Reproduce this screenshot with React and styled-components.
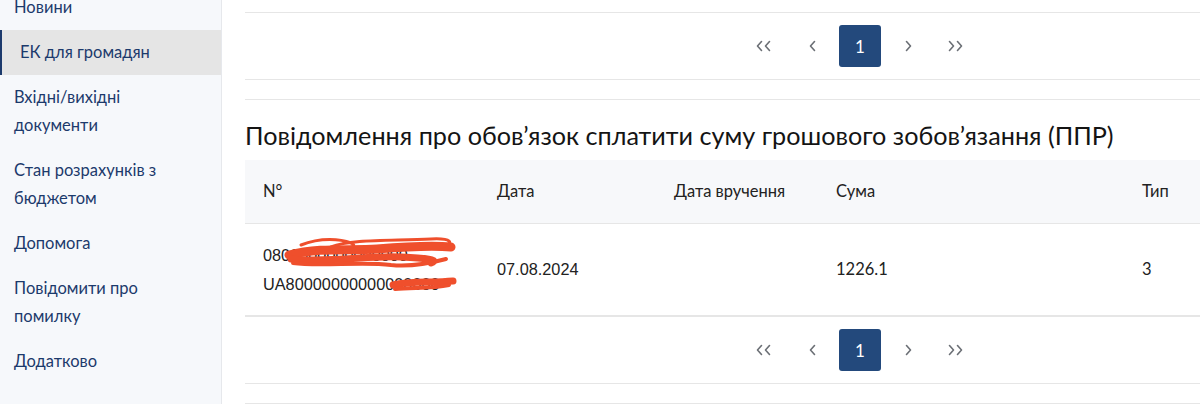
import React from "react";
import styled, { createGlobalStyle } from "styled-components";

const GlobalStyle = createGlobalStyle`
    html, body {
        margin: 0;
        padding: 0;
        background: #ffffff;
        overflow: hidden;
    }
    body {
        font-family: Lato, "Noto Sans", sans-serif;
        color: #1a1a1a;
    }
`;

const Page = styled.div`
    display: flex;
    width: 1200px;
    height: 404px;
    overflow: hidden;
`;

const Sidebar = styled.nav`
    flex: 0 0 221px;
    background: #f6f8fb;
    border-right: 1px solid #e6e8ec;
    display: flex;
    flex-direction: column;
    margin-top: -15px;
`;

const NavItem = styled.div`
    padding: 8px 22px 9px ${p => (p.$active ? "18px" : "14px")};
    font-size: 16.5px;
    line-height: 28px;
    color: #1c3a6c;
    background: ${p => (p.$active ? "#e5e5e5" : "transparent")};
    border-left: ${p => (p.$active ? "2px solid #1c3a6c" : "none")};
`;

const Main = styled.main`
    flex: 0 0 1230px;
    padding-left: 23px;
    margin-top: 12px;
`;

const Pager = styled.div`
    display: flex;
    justify-content: center;
    align-items: center;
    gap: 6px;
    height: 66px;
    border-top: 1px solid #e6e6e6;
    border-bottom: 1px solid #e6e6e6;
`;

const PageLink = styled.span`
    width: 42px;
    height: 42px;
    display: flex;
    align-items: center;
    justify-content: center;
    border-radius: 3px;
    background: ${p => (p.$current ? "#23497c" : "transparent")};
    color: ${p => (p.$current ? "#ffffff" : "#6b6f75")};
    font-size: 17px;
`;

const Section = styled.section`
    margin-top: 19px;
    border-top: 1px solid #e6e6e6;
`;

const Title = styled.h2`
    margin: 0;
    padding: 19px 0 9px;
    font-size: 25.2px;
    line-height: 32px;
    font-weight: 400;
    color: #141414;
    white-space: nowrap;
`;

const Row = styled.div`
    display: grid;
    grid-template-columns: 234px 177px 162px 306px 351px;
    align-items: center;
    height: ${p => (p.$head ? "63px" : "91px")};
    background: ${p => (p.$head ? "#f7f8fa" : "transparent")};
    border-bottom: 1px solid #e6e6e6;
    font-size: 16.5px;
    color: #222;
`;

const Cell = styled.div`
    padding-left: 18px;
    line-height: 29px;
    font-family: ${p => (p.$plain ? '"Liberation Sans", Arial, sans-serif' : "inherit")};
    font-size: ${p => (p.$plain ? "16.3px" : "inherit")};
    position: relative;
`;

const Scribble = styled.svg`
    position: absolute;
    left: 36px;
    top: -8px;
    pointer-events: none;
`;

const Chevron = ({ dir, double }) => {
    const one = dir === "left" ? "M5 1 L1 5.5 L5 10" : "M1 1 L5 5.5 L1 10";
    return (
        <svg width={double ? 16 : 7} height="12" viewBox={double ? "0 0 16 12" : "0 0 7 12"}>
            <g fill="none" stroke="currentColor" strokeWidth="1.6" strokeLinecap="round" strokeLinejoin="round">
                <path d={one} transform="translate(0.5 0.5)" />
                {double && <path d={one} transform="translate(8.5 0.5)" />}
            </g>
        </svg>
    );
};

const Pagination = () => (
    <Pager>
        <PageLink><Chevron dir="left" double /></PageLink>
        <PageLink><Chevron dir="left" /></PageLink>
        <PageLink $current>1</PageLink>
        <PageLink><Chevron dir="right" /></PageLink>
        <PageLink><Chevron dir="right" double /></PageLink>
    </Pager>
);

// red marker over the hidden numbers
const Redaction = () => (
    <Scribble width="180" height="70" viewBox="0 0 180 70">
        <g fill="none" stroke="#ef4f2c" strokeLinecap="round" strokeLinejoin="round">
            <path strokeWidth="9" d="M8 22 C40 14 70 18 96 16 C120 14 150 12 170 14" />
            <path strokeWidth="7" d="M10 26 C50 30 90 22 120 24 C140 25 160 26 150 30" />
            <path strokeWidth="3" d="M20 12 C40 4 60 6 70 10 C80 14 60 18 50 14 C70 6 110 8 150 6 C170 5 175 10 160 14" />
            <path strokeWidth="4" d="M12 30 C40 34 80 28 110 32 C130 34 150 30 165 26" />
            <path strokeWidth="7" d="M112 52 C130 48 150 50 172 48" />
            <path strokeWidth="4" d="M114 56 C130 54 150 56 168 52" />
        </g>
    </Scribble>
);

const menu = [
    { label: "Новини" },
    { label: "ЕК для громадян", active: true },
    { label: "Вхідні/вихідні документи" },
    { label: "Стан розрахунків з бюджетом" },
    { label: "Допомога" },
    { label: "Повідомити про помилку" },
    { label: "Додатково" }
];

export default function App() {
    return (
        <Page>
            <GlobalStyle />
            <Sidebar>
                {menu.map(m => (
                    <NavItem key={m.label} $active={m.active}>
                        {m.label}
                    </NavItem>
                ))}
            </Sidebar>
            <Main>
                <Pagination />
                <Section>
                    <Title>
                        Повідомлення про обов’язок сплатити суму грошового зобов’язання (ППР)
                    </Title>
                    <Row $head>
                        <Cell>N°</Cell>
                        <Cell>Дата</Cell>
                        <Cell>Дата вручення</Cell>
                        <Cell>Сума</Cell>
                        <Cell>Тип</Cell>
                    </Row>
                    <Row>
                        <Cell $plain>
                            0800000000000000
                            <br />
                            UA80000000000000000
                            <Redaction />
                        </Cell>
                        <Cell $plain>07.08.2024</Cell>
                        <Cell />
                        <Cell>1226.1</Cell>
                        <Cell>3</Cell>
                    </Row>
                    <Pagination />
                </Section>
                <Section />
            </Main>
        </Page>
    );
}
